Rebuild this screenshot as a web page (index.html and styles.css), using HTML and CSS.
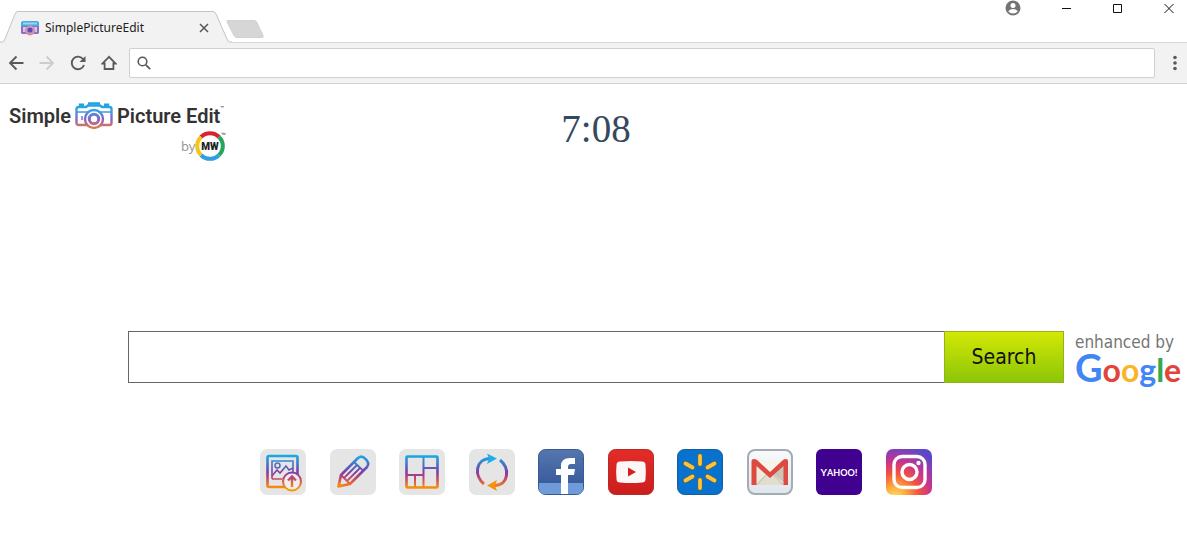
FILE: index.html
```html
<!DOCTYPE html>
<html lang="en">
<head>
<meta charset="utf-8">
<title>SimplePictureEdit</title>
<link rel="stylesheet" href="styles.css">
</head>
<body>
<svg class="defs" aria-hidden="true">
  <defs>
    <linearGradient id="rainbow" gradientUnits="userSpaceOnUse" x1="0" y1="6" x2="0" y2="40"><stop offset="0" stop-color="#10aee8"/><stop offset=".5" stop-color="#7b3fa8"/><stop offset=".68" stop-color="#c2456e"/><stop offset="1" stop-color="#ff9800"/></linearGradient>
    <linearGradient id="cam" gradientUnits="userSpaceOnUse" x1="0" y1="0" x2="0" y2="28"><stop offset="0" stop-color="#16a5e0"/><stop offset=".3" stop-color="#3aa0e4"/><stop offset=".62" stop-color="#8d62c4"/><stop offset="1" stop-color="#f0822e"/></linearGradient>
    <linearGradient id="fb" x1="0" y1="0" x2="0" y2="1"><stop offset="0" stop-color="#5576ae"/><stop offset="1" stop-color="#2f5498"/></linearGradient>
    <linearGradient id="yt" x1="0" y1="0" x2="0" y2="1"><stop offset="0" stop-color="#e32c27"/><stop offset="1" stop-color="#cb1d1d"/></linearGradient>
    <linearGradient id="gm" x1="0" y1="0" x2="0" y2="1"><stop offset="0" stop-color="#f8fafb"/><stop offset="1" stop-color="#dfe6ec"/></linearGradient>
    <radialGradient id="ig" cx=".2" cy="1.05" r="1.15"><stop offset="0" stop-color="#ffdc6a"/><stop offset=".2" stop-color="#fdae3d"/><stop offset=".45" stop-color="#f5533d"/><stop offset=".68" stop-color="#c9338d"/><stop offset="1" stop-color="#5a48cc"/></radialGradient>
    <symbol id="camera" viewBox="0 0 38 28">
      <g fill="none" stroke="url(#cam)" stroke-width="2.400">
        <path d="M3.500 5H11l2-1.500h12L27 5h7.500q2 0 2 2v14q0 2-2 2h-31q-2 0-2-2V7q0-2 2-2z"/>
        <path d="M5 4.500V2.800h4M29 2.800h4v1.700M13 1.500h12"/>
        <path d="M1 10h12M25 10h12M7 14v4" stroke-width="1.500"/>
        <circle cx="19" cy="17" r="9" fill="#fff"/>
        <circle cx="19" cy="17" r="4.700" stroke-width="3"/>
      </g>
    </symbol>
  </defs>
</svg>

<header class="browser">
  <div class="tabstrip">
    <div class="tab">
      <svg class="tab-shape" viewBox="0 0 232 32" aria-hidden="true"><path d="M0 31h2q2 0 3-3L15 3q1-2.500 3-2.500h195q2 0 3 2.500l11 25q1 3 3 3h2V32H0z" fill="#f2f2f2"/><path d="M0 31h2q2 0 3-3L15 3q1-2.500 3-2.500h195q2 0 3 2.500l11 25q1 3 3 3h2" fill="none" stroke="#c4c4c4"/></svg>
      <svg class="favicon" viewBox="0 0 18 16" aria-hidden="true"><path d="M2 1h14q2 0 2 2v9q0 2-2 2H2q-2 0-2-2V3q0-2 2-2z" fill="#4ba9e4"/><path d="M0 6h18v6q0 2-2 2H2q-2 0-2-2z" fill="#8871c4"/><path d="M2 2.500h14v2H2z" fill="#95d6f2"/><path d="M2 7h3v5H2zM13 7h3v5h-3z" fill="#d5c5eb"/><circle cx="9" cy="10.500" r="5" fill="#e58287"/><circle cx="9" cy="10" r="3.800" fill="#b9a4e4"/><circle cx="9" cy="10" r="2.600" fill="#644ab1"/></svg>
      <span class="tab-title">SimplePictureEdit</span>
      <button class="tab-close" aria-label="Close tab"><svg viewBox="0 0 10 10" width="10" height="10"><path d="M1 1l8 8M9 1l-8 8" stroke="#555" stroke-width="1.500"/></svg></button>
    </div>
    <button class="new-tab" aria-label="New tab"><svg viewBox="0 0 38 18" width="38" height="18"><path d="M2 .5h26q2 0 3 2l6 13q1 2-1 2H11q-2 0-3-2L1 2Q.500.500 2 .500z" fill="#d6d6d6" stroke="#d2d2d2"/></svg></button>
    <div class="window-controls">
      <button aria-label="Profile"><svg viewBox="0 0 16 16" width="16" height="16"><circle cx="8" cy="8" r="7.500" fill="#737373"/><circle cx="8" cy="5.500" r="2.500" fill="#fff"/><path d="M3.200 11.200Q5 8.900 8 8.900t4.800 2.300Q11 13.600 8 13.600t-4.800-2.400z" fill="#fff"/></svg></button>
      <button aria-label="Minimize"><svg viewBox="0 0 10 16" width="10" height="16"><path d="M0 8.500h9" stroke="#111"/></svg></button>
      <button aria-label="Maximize"><svg viewBox="0 0 10 16" width="10" height="16"><path d="M.5 4.500h8v8h-8z" fill="none" stroke="#111"/></svg></button>
      <button aria-label="Close"><svg viewBox="0 0 10 16" width="10" height="16"><path d="M.5 4l9 9M9.500 4l-9 9" stroke="#111"/></svg></button>
    </div>
  </div>
  <nav class="toolbar" aria-label="Browser toolbar">
    <button aria-label="Back"><svg viewBox="0 0 16 16" width="16" height="16"><path d="M15.500 8H2M8.500 1.500L2 8l6.500 6.500" fill="none" stroke="#5a5a5a" stroke-width="1.800"/></svg></button>
    <button aria-label="Forward"><svg viewBox="0 0 16 16" width="16" height="16"><path d="M.5 8H14M7.500 1.500L14 8l-6.500 6.500" fill="none" stroke="#ccc" stroke-width="1.800"/></svg></button>
    <button aria-label="Reload"><svg viewBox="0 0 16 16" width="16" height="16"><path d="M13.200 4.300A6.300 6.300 0 1 0 14 10" fill="none" stroke="#5a5a5a" stroke-width="1.900"/><path d="M15.500 1v6H9.500z" fill="#5a5a5a"/></svg></button>
    <button aria-label="Home"><svg viewBox="0 0 16 16" width="16" height="16"><path d="M8 1.800L1.600 8.500h2V14h8.800V8.500h2z" fill="none" stroke="#5a5a5a" stroke-width="1.800"/></svg></button>
    <label class="omnibox">
      <svg viewBox="0 0 14 14" width="14" height="14" aria-hidden="true"><circle cx="5.500" cy="5.500" r="4.300" fill="none" stroke="#5a5a5a" stroke-width="1.600"/><path d="M8.800 8.800l4.400 4.400" stroke="#5a5a5a" stroke-width="1.800"/></svg>
      <input type="text" aria-label="Address bar">
    </label>
    <button class="menu" aria-label="Menu"><svg viewBox="0 0 4 16" width="4" height="16"><g fill="#5a5a5a"><circle cx="2" cy="2.500" r="1.800"/><circle cx="2" cy="8" r="1.800"/><circle cx="2" cy="13.500" r="1.800"/></g></svg></button>
  </nav>
</header>

<main>
  <section class="top">
    <div class="brand">
      <div class="brand-name"><span>Simple</span><svg class="brand-camera" aria-hidden="true"><use href="#camera"/></svg><span>Picture Edit</span><sup>™</sup></div>
      <div class="brand-by"><span>by</span><svg viewBox="0 0 30 30" width="30" height="30" role="img" aria-label="MW"><g fill="none" stroke-width="4"><path d="M6 6A12.500 12.500 0 0 1 24 6" stroke="#d92332"/><path d="M24 6A12.500 12.500 0 0 1 24 24" stroke="#26a65b"/><path d="M24 24A12.500 12.500 0 0 1 6 24" stroke="#2e9fe0"/><path d="M6 24A12.500 12.500 0 0 1 6 6" stroke="#f4c51c"/></g><text x="15" y="19" text-anchor="middle" class="mw">MW</text></svg><sup>™</sup></div>
    </div>
    <time class="clock">7:08</time>
  </section>

  <form class="search">
    <input type="text" aria-label="Search the web">
    <button type="button">Search</button>
    <div class="enhanced"><span>enhanced by</span><div class="google"><span class="blue capital">G</span><span class="red">o</span><span class="yellow">o</span><span class="blue">g</span><span class="green">l</span><span class="red">e</span></div></div>
  </form>

  <nav class="shortcuts" aria-label="Shortcuts">
    <a href="#" aria-label="Upload picture"><svg viewBox="0 0 46 46"><rect width="46" height="46" rx="7" fill="#e6e5e5"/><g fill="none" stroke="url(#rainbow)" stroke-width="2"><rect x="7.500" y="7" width="30" height="31" rx="1.500" stroke-width="2.600"/><path d="M12 30V12h21v12M12 30h10" stroke-width="1.600"/><circle cx="17.500" cy="16.500" r="2.500" stroke-width="1.500"/><path d="M12 27l5-6 3 3 6-7 3 4 4-2" stroke-width="1.600"/><circle cx="32" cy="32.500" r="9" fill="#eee"/><path d="M32 38V28M28 31.500l4-4 4 4" stroke-width="2.400"/></g></svg></a>
    <a href="#" aria-label="Draw"><svg viewBox="0 0 46 46"><rect width="46" height="46" rx="7" fill="#e6e5e5"/><g fill="none" stroke="url(#rainbow)" stroke-width="2.600" stroke-linejoin="round"><path d="M8.500 37.500L11 26 28 9q4-3 7.500 1 4.500 4 1.500 8L20 35z"/><path d="M24 13l9.500 9M11 26l3 3 3 3 3 3M14 29l13-13M17 32l13-13" stroke-width="1.800"/></g><path d="M8 38l1-5 4 4z" fill="#f68b13"/></svg></a>
    <a href="#" aria-label="Collage"><svg viewBox="0 0 46 46"><rect width="46" height="46" rx="7" fill="#e6e5e5"/><g fill="none" stroke="url(#rainbow)" stroke-width="2.600"><rect x="7.500" y="7.500" width="31" height="31" rx="1"/><path d="M24.500 7v32M24.500 19H39M7 26h17.500M16 26v13" stroke-width="2"/></g></svg></a>
    <a href="#" aria-label="Convert"><svg viewBox="0 0 46 46"><rect width="46" height="46" rx="7" fill="#e6e5e5"/><g fill="none" stroke="url(#rainbow)" stroke-width="3"><path d="M15 35C5 27 6 10 21 9.500"/><path d="M31 11C41 19 40 36 26 36.500"/></g><path d="M18 4.500l10 5-10 5.500 2-5.500z" fill="#1eaee5"/><path d="M28 31L18 36.500l10 5.500-2-5.500z" fill="#f8910e"/></svg></a>
    <a href="#" aria-label="Facebook"><svg viewBox="0 0 46 46"><rect x=".5" y=".5" width="45" height="45" rx="7" fill="url(#fb)" stroke="#395a91"/><path d="M1 34h44v5q0 6-6 6H7q-6 0-6-6z" fill="#6f9bd9"/><path d="M23 45V26h-5v-6h5v-3q0-8 9-8h5v6h-4q-3 0-3 3v2h7l-1 6h-6v19z" fill="#fff"/></svg></a>
    <a href="#" aria-label="YouTube"><svg viewBox="0 0 46 46"><rect x=".5" y=".5" width="45" height="45" rx="7" fill="url(#yt)" stroke="#b92a26"/><path d="M12 12.500q11-1 22 0 3.500 0 3.500 3.500.7 7 0 14 0 3.500-3.500 3.500-11 1-22 0-3.500 0-3.500-3.500-.7-7 0-14 0-3.500 3.500-3.500z" fill="#fbf7f6"/><path d="M20 18.500l8 4.500-8 4.500z" fill="#d1211f"/></svg></a>
    <a href="#" aria-label="Walmart"><svg viewBox="0 0 46 46"><rect x=".5" y=".5" width="45" height="45" rx="7" fill="#0872cf" stroke="#155b9e"/><g stroke="#695f3e" stroke-width="5.200" stroke-linecap="round"><path d="M23 7v8M23 31v8M8.500 14.500l7 4M37.500 14.500l-7 4M8.500 31.500l7-4M37.500 31.500l-7-4"/></g><g stroke="#f9c33c" stroke-width="3.800" stroke-linecap="round"><path d="M23 7v8M23 31v8M8.500 14.500l7 4M37.500 14.500l-7 4M8.500 31.500l7-4M37.500 31.500l-7-4"/></g></svg></a>
    <a href="#" aria-label="Gmail"><svg viewBox="0 0 46 46"><rect x="1" y="1" width="44" height="44" rx="7" fill="url(#gm)" stroke="#a4acb3" stroke-width="2"/><path d="M6 11h34v25H6z" fill="#edeae0"/><path d="M40 12v24L26 25z" fill="#c8c5b9"/><path d="M7 36l13-12h6l13 12z" fill="#e2dece"/><path d="M10 11h27L23 24z" fill="#f5f3ea"/><path d="M10 36l10-11M36 36L26 25" stroke="#c1bdaf" fill="none"/><path d="M4.500 36V12q0-2 2.500-2 2 0 3 1l13 12 13-12q1-1 3-1 2 0 2 2v24h-4.500V17L23 29 9.500 17v19z" fill="#dd4a40"/></svg></a>
    <a href="#" aria-label="Yahoo"><svg viewBox="0 0 46 46"><rect width="46" height="46" rx="6" fill="#400090"/><text x="23" y="27" text-anchor="middle" class="yahoo"><tspan class="yahoo-cap">Y</tspan>AHOO<tspan class="yahoo-cap">!</tspan></text></svg></a>
    <a href="#" aria-label="Instagram"><svg viewBox="0 0 46 46"><rect width="46" height="46" rx="7" fill="url(#ig)"/><g fill="none" stroke="#fff" stroke-width="3.400"><rect x="8" y="7.500" width="31" height="31" rx="8"/><circle cx="23.500" cy="23" r="7.500"/></g><circle cx="32.500" cy="14" r="2.200" fill="#fff"/></svg></a>
  </nav>
</main>
</body>
</html>
```

FILE: styles.css
```css
* { box-sizing: border-box; }
body { margin: 0; background: #fff; font-family: "Noto Sans", "Open Sans", sans-serif; }
button { margin: 0; padding: 0; border: 0; background: none; font: inherit; display: flex; align-items: center; justify-content: center; }
input { margin: 0; border: 0; outline: 0; font: inherit; }
svg { display: block; flex: none; }
.defs { position: absolute; width: 0; height: 0; }

.tabstrip { display: flex; align-items: flex-end; height: 43px; border-bottom: 1px solid #d6d6d6; }
.tab { position: relative; display: flex; align-items: center; width: 232px; height: 32px; padding: 1px 23px 0 21px; margin-bottom: -1px; }
.tab-shape { position: absolute; left: 0; top: 0; width: 232px; height: 32px; }
.favicon { position: relative; width: 18px; height: 16px; }
.tab-title { position: relative; flex: 1; margin-left: 6px; font-size: 12px; line-height: 18px; color: #222; }
.tab-close { position: relative; width: 10px; height: 10px; }
.new-tab { margin: 0 0 4px -6px; z-index: 1; }
.window-controls { display: flex; gap: 41px; margin-left: auto; padding-right: 13px; align-self: flex-start; }

.toolbar { display: flex; align-items: center; gap: 15px; height: 41px; padding: 0 10px 0 8px; background: #f2f2f2; border-bottom: 1px solid #d2d2d2; }
.omnibox { flex: 1; display: flex; align-items: center; gap: 8px; height: 30px; margin-left: -3px; padding: 0 7px; background: #fff; border: 1px solid #d0d0d0; border-radius: 2px; }
.omnibox input { flex: 1; min-width: 0; font-size: 14px; }
.menu { margin-left: 3px; }

.top { display: grid; grid-template-columns: 1fr auto 1fr; padding: 16px 4px 0 9px; height: 247px; }
.brand { justify-self: start; width: 217px; }
.brand-name { display: flex; align-items: center; height: 32px; font-family: Roboto, sans-serif; font-size: 20px; font-weight: 600; color: #333; white-space: nowrap; }
.brand-camera { width: 38px; height: 28px; margin: 0 4px; }
.brand-name sup, .brand-by sup { font-size: 6px; line-height: 8px; align-self: flex-start; color: #555; margin-top: 4px; }
.brand-by { display: flex; justify-content: flex-end; align-items: center; font-size: 13px; color: #999; height: 30px; margin-top: -1px; }
.brand-by sup { margin: 0 0 0 -4px; }
.mw { font-family: Roboto, sans-serif; font-size: 10px; font-weight: 900; fill: #222; }
.clock { font-family: "Liberation Serif", serif; font-size: 39px; line-height: 46px; padding-top: 6px; color: #34495e; }

.search { display: flex; align-items: stretch; height: 52px; margin: 0 5px 0 128px; }
.search > input { flex: 1; min-width: 0; padding: 0 12px; border: 1px solid #666; border-right: 0; font-size: 22px; }
.search > button { width: 120px; border: 1px solid #92b31a; background: linear-gradient(#d3e805, #8cc508); font-family: "DejaVu Sans Condensed", "Noto Sans", sans-serif; font-size: 21px; color: #111; }
.enhanced { width: 107px; margin-left: 11px; color: #757575; white-space: nowrap; }
.enhanced > span { display: block; font-family: "DejaVu Sans Condensed", "Noto Sans", sans-serif; font-size: 17px; line-height: 22px; }
.google { font-family: Lato, sans-serif; font-size: 32px; line-height: 32px; font-weight: 700; margin-top: -2px; }
.capital { font-size: 38px; }
.blue { color: #4285f4; }
.red { color: #e2443b; }
.yellow { color: #f7b529; }
.green { color: #34a853; }

.shortcuts { display: flex; justify-content: space-between; max-width: 677px; margin: 66px auto 0; padding-left: 5px; }
.shortcuts a { display: block; width: 46px; }
.shortcuts svg { width: 46px; height: 46px; }
.yahoo { font-family: Lato, sans-serif; font-size: 9px; font-weight: 700; fill: #fff; }
.yahoo-cap { font-size: 10px; }
```
